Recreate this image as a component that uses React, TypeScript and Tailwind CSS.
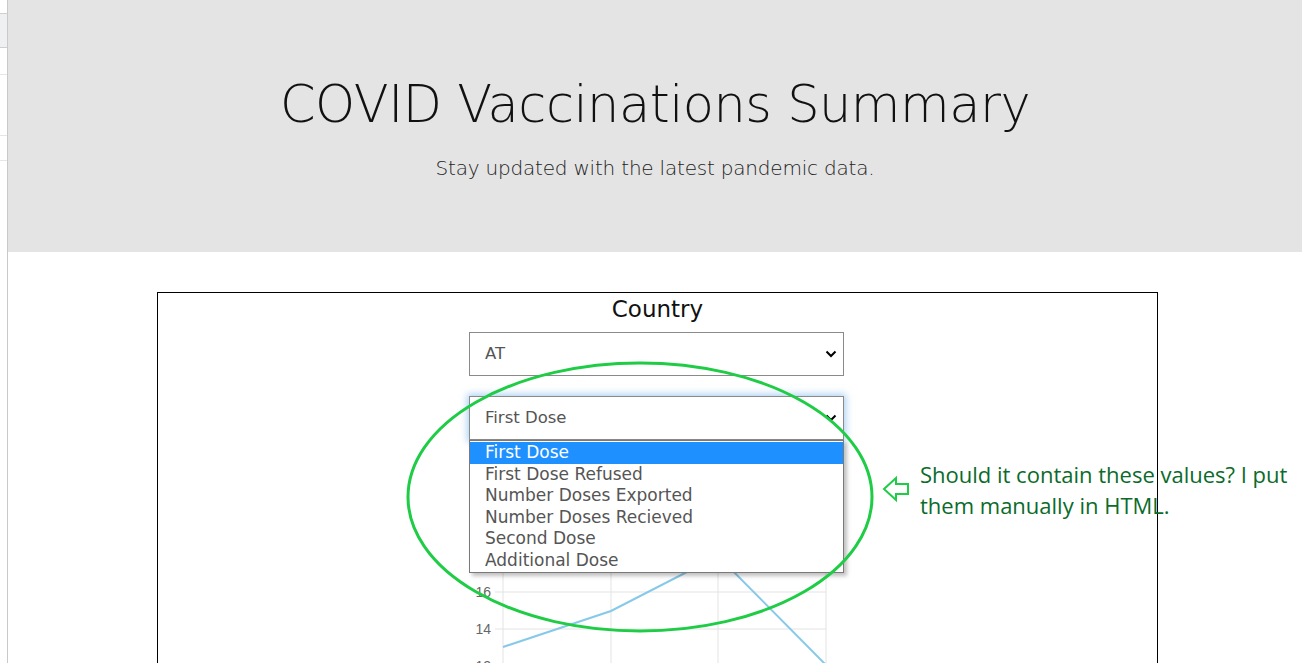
import React from 'react';

const options = [
  'First Dose',
  'First Dose Refused',
  'Number Doses Exported',
  'Number Doses Recieved',
  'Second Dose',
  'Additional Dose',
];

function Chevron() {
  return (
    <svg width="12" height="8" viewBox="0 0 12 8" className="shrink-0">
      <path d="M1.5 1.5 L6 6 L10.5 1.5" fill="none" stroke="#000" strokeWidth="2" />
    </svg>
  );
}

function FakeSelect({ value, focused }: { value: string; focused?: boolean }) {
  return (
    <div
      className={`flex h-[44px] w-[375px] items-center justify-between border bg-white pl-[15px] pr-[6px] text-[16.5px] text-[#555] ${
        focused ? 'border-[#8a8a8a] shadow-[0_0_7px_2px_rgba(120,180,235,0.6)]' : 'border-[#8a8a8a]'
      }`}
    >
      <span>{value}</span>
      <Chevron />
    </div>
  );
}

function Chart() {
  const grid = '#e3e3e3';
  return (
    <svg width="375" height="240" viewBox="0 0 375 240" className="block">
      {[34, 142, 249, 357].map((x) => (
        <line key={x} x1={x} y1={0} x2={x} y2={240} stroke={grid} strokeWidth="1" />
      ))}
      {[33, 70, 107, 144, 181, 218].map((y) => (
        <line key={y} x1={26} y1={y} x2={357} y2={y} stroke={grid} strokeWidth="1" />
      ))}
      {[
        [33, '22'],
        [70, '20'],
        [107, '18'],
        [144, '16'],
        [181, '14'],
        [218, '12'],
      ].map(([y, t]) => (
        <text
          key={t as string}
          x={22}
          y={(y as number) + 5}
          textAnchor="end"
          fontSize="14"
          fill="#666"
          fontFamily="Liberation Sans, Arial, sans-serif"
        >
          {t}
        </text>
      ))}
      <polyline
        points="34,199 142,163 249,108 357,217"
        fill="none"
        stroke="#87c9e8"
        strokeWidth="2"
      />
    </svg>
  );
}

export default function App() {
  return (
    <div className="relative flex h-[663px] w-[1302px] overflow-hidden bg-white font-['DejaVu_Sans',sans-serif]">
      {/* sliver of another window */}
      <div className="flex h-full w-[8px] shrink-0 flex-col border-r border-[#c9c9c9] bg-white">
        <div className="h-[14px] shrink-0 border-b border-[#d0d0d0]" />
        <div className="h-[34px] shrink-0 border-b border-[#cfcfcf] bg-[#eef0f2]" />
        <div className="h-[27px] shrink-0 border-b border-[#e6e6e6]" />
        <div className="h-[61px] shrink-0 border-b border-[#e6e6e6]" />
        <div className="h-[25px] shrink-0 border-b border-[#e6e6e6]" />
      </div>

      <div className="flex min-w-0 flex-1 flex-col">
        {/* header */}
        <div className="flex h-[252px] shrink-0 flex-col items-center bg-[#e4e4e4] pt-[74px]">
          <h1 className="text-[51px] font-extralight leading-[62px] tracking-[-0.5px] text-[#111]">
            COVID Vaccinations Summary
          </h1>
          <p className="mt-[17px] text-[20px] font-extralight tracking-[-0.2px] text-[#222]">
            Stay updated with the latest pandemic data.
          </p>
        </div>

        {/* chart card */}
        <div className="ml-[149px] mt-[40px] flex h-[400px] w-[1001px] shrink-0 flex-col items-center border border-black bg-white">
          <div className="mt-[1px] text-[23px] leading-[30px] text-[#111]">Country</div>
          <div className="mr-[2px] mt-[8px]">
            <FakeSelect value="AT" />
          </div>
          <div className="relative mr-[2px] mt-[20px]">
            <FakeSelect value="First Dose" focused />
            <div className="absolute left-0 top-[44px] z-10 w-[375px] border border-[#7a7a7a] bg-white py-[1px] text-[17px] leading-[21.5px] text-[#555] shadow-[3px_3px_4px_rgba(0,0,0,0.25)]">
              {options.map((o, i) => (
                <div
                  key={o}
                  className={`pl-[15px] ${i === 0 ? 'bg-[#1e90ff] text-white' : ''}`}
                >
                  {o}
                </div>
              ))}
            </div>
            <div className="mt-[8px]">
              <Chart />
            </div>
          </div>
        </div>
      </div>

      {/* annotation overlay */}
      <svg className="pointer-events-none absolute left-0 top-0 z-20" width="1302" height="663">
        <ellipse cx="640" cy="497" rx="232" ry="134" fill="none" stroke="#1fcc45" strokeWidth="3" />
        <path
          d="M884 489 L896 478 L896 484 L908 484 L908 494 L896 494 L896 500 Z"
          fill="none"
          stroke="#1fcc45"
          strokeWidth="2"
          strokeLinejoin="miter"
        />
      </svg>
      <div className="absolute left-[920px] top-[459px] z-0 w-[378px] font-['Open_Sans',sans-serif] text-[22px] leading-[31px] text-[#0a6b2a]">
        Should it contain these values? I put them manually in HTML.
      </div>
    </div>
  );
}
